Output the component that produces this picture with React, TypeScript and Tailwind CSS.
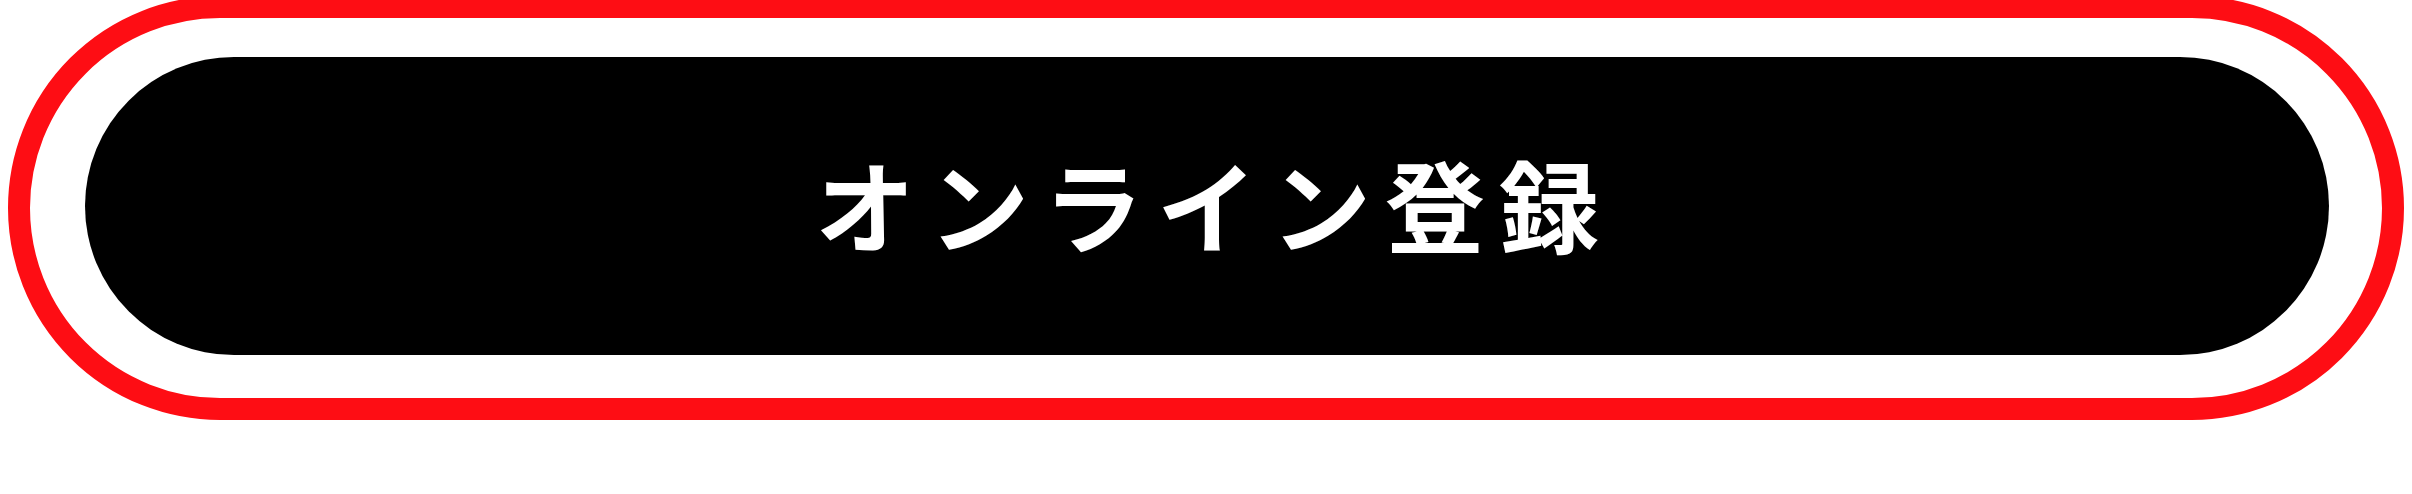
import React from "react";

export default function App() {
  return (
    <div className="w-[2412px] h-[494px] bg-white overflow-hidden">
      <div className="ml-[8px] -mt-[4px] w-[2396px] h-[424px] rounded-full border-[22px] border-[#fe0d14] pt-[39px] pb-[43px] pl-[55px] pr-[53px]">
        <div className="w-full h-[298px] rounded-full bg-black flex items-center justify-center">
          <p className="m-0 text-white text-[100px] leading-[1] font-bold tracking-[14px] pl-[14px] pb-[6px] whitespace-nowrap font-['Noto_Sans_CJK_JP','Noto_Sans',sans-serif]">
            オンライン登録
          </p>
        </div>
      </div>
    </div>
  );
}
